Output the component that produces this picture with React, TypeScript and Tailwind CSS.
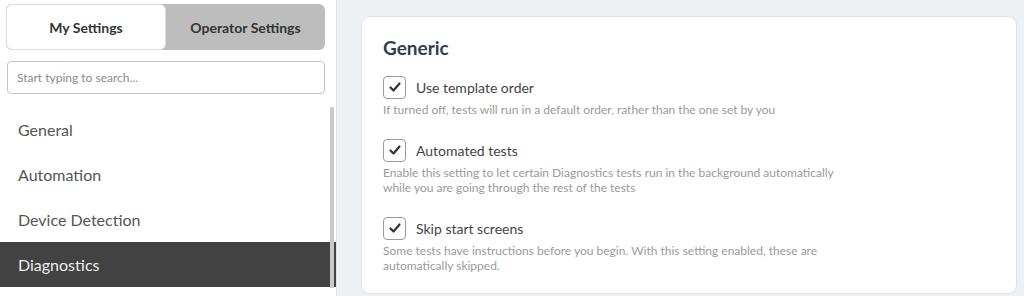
import { useState } from 'react';

const navItems = ['General', 'Automation', 'Device Detection', 'Diagnostics'];

const settings = [
  {
    label: 'Use template order',
    description: 'If turned off, tests will run in a default order, rather than the one set by you',
  },
  {
    label: 'Automated tests',
    description:
      'Enable this setting to let certain Diagnostics tests run in the background automatically while you are going through the rest of the tests',
  },
  {
    label: 'Skip start screens',
    description:
      'Some tests have instructions before you begin. With this setting enabled, these are automatically skipped.',
  },
];

function CheckIcon() {
  return (
    <svg width="14" height="14" viewBox="0 0 14 14" fill="none">
      <path d="M2.5 7.5 L5.5 10.5 L11.5 3.5" stroke="#333" strokeWidth="2.2" strokeLinecap="round" strokeLinejoin="round" />
    </svg>
  );
}

export default function App() {
  const [activeTab, setActiveTab] = useState('mine');
  const [activeNav, setActiveNav] = useState('Diagnostics');
  const [checked, setChecked] = useState([true, true, true]);

  return (
    <div className="flex h-[296px] w-[1024px] overflow-hidden bg-[#eef1f4] font-['Lato',sans-serif]">
      {/* sidebar */}
      <aside className="flex w-[337px] shrink-0 flex-col border-r border-[#dde1e6] bg-white">
        <div className="px-[6px] pt-[4px]">
          <div className="flex h-[46px] w-[319px] rounded-md bg-[#bdbdbd]">
            <button
              onClick={() => setActiveTab('mine')}
              className={`w-[160px] rounded-md text-[14px] font-bold text-[#333] ${
                activeTab === 'mine' ? 'border border-[#dcdcdc] bg-white' : ''
              }`}
            >
              My Settings
            </button>
            <button
              onClick={() => setActiveTab('operator')}
              className={`flex-1 rounded-md text-[14px] font-bold text-[#333] ${
                activeTab === 'operator' ? 'border border-[#dcdcdc] bg-white' : ''
              }`}
            >
              Operator Settings
            </button>
          </div>
        </div>
        <div className="px-[7px] pt-[11px]">
          <input
            placeholder="Start typing to search..."
            className="h-[33px] w-[318px] rounded-[4px] border border-[#c4c4c4] px-[9px] text-[12px] text-[#333] outline-none placeholder:text-[#8a8a8a]"
          />
        </div>
        <div className="relative mt-[13px] flex-1">
          <ul>
            {navItems.map(item => (
              <li
                key={item}
                onClick={() => setActiveNav(item)}
                className={`flex h-[45px] cursor-pointer items-center pl-[18px] text-[16px] ${
                  activeNav === item ? 'bg-[#424242] text-[#eeeeee]' : 'text-[#555]'
                }`}
              >
                {item}
              </li>
            ))}
          </ul>
          <div className="absolute right-[2px] top-0 h-[181px] w-[4px] rounded-t-full bg-[#c8c8c8]" />
        </div>
      </aside>

      {/* content */}
      <main className="flex-1 pl-[24px] pr-[7px] pt-[16px]">
        <div className="h-[278px] rounded-[9px] border border-[#dfe3e8] bg-white px-[21px] pt-[17px]">
          <h2 className="text-[19px] font-bold text-[#2f3e4e]">Generic</h2>
          <div className="mt-[13px] flex flex-col gap-[22px]">
            {settings.map((s, i) => (
              <div key={s.label}>
                <label className="flex cursor-pointer items-center gap-[10px]">
                  <span
                    onClick={() => setChecked(checked.map((c, j) => (j === i ? !c : c)))}
                    className="flex h-[23px] w-[23px] items-center justify-center rounded-[4px] border border-[#9a9a9a] bg-white"
                  >
                    {checked[i] && <CheckIcon />}
                  </span>
                  <span className="text-[14px] text-[#444]">{s.label}</span>
                </label>
                <p className="mt-[3px] max-w-[455px] text-[12px] leading-[15px] text-[#9a9a9a]">{s.description}</p>
              </div>
            ))}
          </div>
        </div>
      </main>
    </div>
  );
}
